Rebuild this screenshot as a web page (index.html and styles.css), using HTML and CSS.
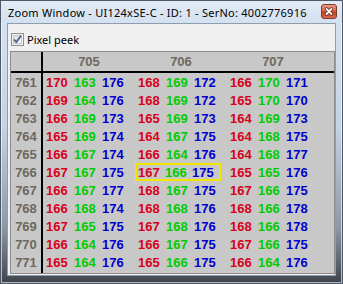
FILE: index.html
```
<!DOCTYPE html>
<html lang="en">
<head>
    <meta charset="UTF-8">
    <title>Zoom Window</title>
    <link rel="stylesheet" href="styles.css">
</head>
<body>
    <div class="window">
        <div class="titlebar">
            <span class="title">Zoom Window - UI124xSE-C - ID: 1 - SerNo: 4002776916</span>
            <svg class="close" width="16" height="15" viewBox="0 0 16 15">
                <defs>
                    <linearGradient id="cl" x1="0" y1="0" x2="0" y2="1">
                        <stop offset="0" stop-color="#eba391"/>
                        <stop offset="0.45" stop-color="#d8664c"/>
                        <stop offset="0.55" stop-color="#c3401f"/>
                        <stop offset="1" stop-color="#d8704f"/>
                    </linearGradient>
                </defs>
                <rect x="0.5" y="0.5" width="15" height="14" rx="2.5" fill="url(#cl)" stroke="#7d3a2c"/>
                <path d="M5.5 5 L10.5 10 M10.5 5 L5.5 10" stroke="#5e2418" stroke-width="3.4" stroke-linecap="round"/>
                <path d="M5.5 5 L10.5 10 M10.5 5 L5.5 10" stroke="#ffffff" stroke-width="1.8" stroke-linecap="round"/>
            </svg>
        </div>
        <div class="client">
            <div class="options">
                <svg class="check" width="13" height="13" viewBox="0 0 13 13">
                    <defs>
                        <linearGradient id="cb" x1="0" y1="0" x2="1" y2="1">
                            <stop offset="0" stop-color="#d8d8d8"/>
                            <stop offset="1" stop-color="#fbfbfb"/>
                        </linearGradient>
                    </defs>
                    <rect x="0.5" y="0.5" width="12" height="12" fill="#f4f4f4" stroke="#8e8f8f"/>
                    <rect x="2.5" y="2.5" width="8" height="8" fill="url(#cb)" stroke="#c6c6c6"/>
                    <path d="M3 6.5 L5.3 9 L10 2.8" fill="none" stroke="#4a5f8e" stroke-width="1.8"/>
                </svg>
                <label>Pixel peek</label>
            </div>
            <div class="peek">
                <div class="row head">
                    <div class="lbl"></div>
                    <div class="grp">705</div>
                    <div class="grp">706</div>
                    <div class="grp">707</div>
                </div>
                <div class="row">
                    <div class="lbl">761</div>
                    <div class="grp"><span class="r">170</span><span class="g">163</span><span class="b">176</span></div>
                    <div class="grp"><span class="r">168</span><span class="g">169</span><span class="b">172</span></div>
                    <div class="grp"><span class="r">166</span><span class="g">170</span><span class="b">171</span></div>
                </div>
                <div class="row">
                    <div class="lbl">762</div>
                    <div class="grp"><span class="r">169</span><span class="g">164</span><span class="b">176</span></div>
                    <div class="grp"><span class="r">168</span><span class="g">169</span><span class="b">172</span></div>
                    <div class="grp"><span class="r">165</span><span class="g">170</span><span class="b">170</span></div>
                </div>
                <div class="row">
                    <div class="lbl">763</div>
                    <div class="grp"><span class="r">166</span><span class="g">169</span><span class="b">173</span></div>
                    <div class="grp"><span class="r">165</span><span class="g">169</span><span class="b">173</span></div>
                    <div class="grp"><span class="r">164</span><span class="g">169</span><span class="b">173</span></div>
                </div>
                <div class="row">
                    <div class="lbl">764</div>
                    <div class="grp"><span class="r">165</span><span class="g">169</span><span class="b">174</span></div>
                    <div class="grp"><span class="r">164</span><span class="g">167</span><span class="b">175</span></div>
                    <div class="grp"><span class="r">164</span><span class="g">168</span><span class="b">175</span></div>
                </div>
                <div class="row">
                    <div class="lbl">765</div>
                    <div class="grp"><span class="r">166</span><span class="g">167</span><span class="b">174</span></div>
                    <div class="grp"><span class="r">166</span><span class="g">164</span><span class="b">176</span></div>
                    <div class="grp"><span class="r">164</span><span class="g">168</span><span class="b">177</span></div>
                </div>
                <div class="row">
                    <div class="lbl">766</div>
                    <div class="grp"><span class="r">167</span><span class="g">167</span><span class="b">175</span></div>
                    <div class="grp sel"><span class="r">167</span><span class="g">166</span><span class="b">175</span></div>
                    <div class="grp"><span class="r">165</span><span class="g">165</span><span class="b">176</span></div>
                </div>
                <div class="row">
                    <div class="lbl">767</div>
                    <div class="grp"><span class="r">166</span><span class="g">167</span><span class="b">177</span></div>
                    <div class="grp"><span class="r">168</span><span class="g">167</span><span class="b">175</span></div>
                    <div class="grp"><span class="r">167</span><span class="g">166</span><span class="b">175</span></div>
                </div>
                <div class="row">
                    <div class="lbl">768</div>
                    <div class="grp"><span class="r">166</span><span class="g">168</span><span class="b">174</span></div>
                    <div class="grp"><span class="r">168</span><span class="g">168</span><span class="b">176</span></div>
                    <div class="grp"><span class="r">168</span><span class="g">166</span><span class="b">178</span></div>
                </div>
                <div class="row">
                    <div class="lbl">769</div>
                    <div class="grp"><span class="r">167</span><span class="g">165</span><span class="b">175</span></div>
                    <div class="grp"><span class="r">167</span><span class="g">168</span><span class="b">176</span></div>
                    <div class="grp"><span class="r">168</span><span class="g">166</span><span class="b">178</span></div>
                </div>
                <div class="row">
                    <div class="lbl">770</div>
                    <div class="grp"><span class="r">166</span><span class="g">164</span><span class="b">176</span></div>
                    <div class="grp"><span class="r">166</span><span class="g">167</span><span class="b">175</span></div>
                    <div class="grp"><span class="r">167</span><span class="g">166</span><span class="b">175</span></div>
                </div>
                <div class="row">
                    <div class="lbl">771</div>
                    <div class="grp"><span class="r">165</span><span class="g">164</span><span class="b">176</span></div>
                    <div class="grp"><span class="r">165</span><span class="g">166</span><span class="b">175</span></div>
                    <div class="grp"><span class="r">166</span><span class="g">164</span><span class="b">176</span></div>
                </div>
                <div class="row foot">
                    <div class="lbl"></div>
                </div>
            </div>
        </div>
    </div>
</body>
</html>
```

FILE: styles.css
```
* {
    box-sizing: border-box;
}
body {
    margin: 0;
}
.window {
    width: 343px;
    height: 284px;
    display: flex;
    flex-direction: column;
    background: linear-gradient(#d9e5f3, #c3d2e4 45%, #8e99a8 80%, #3f444c);
    border: 1px solid #50596a;
    box-shadow: inset 0 0 0 1px rgba(255, 255, 255, 0.6);
}
.titlebar {
    height: 22px;
    display: flex;
    align-items: center;
    padding-left: 7px;
    background: linear-gradient(#e2ecf7, #d3e0ef);
}
.title {
    flex: 1;
    font-family: "Noto Sans", sans-serif;
    font-size: 11px;
    letter-spacing: 0.25px;
    color: #000;
    white-space: nowrap;
    overflow: hidden;
}
.close {
    flex-shrink: 0;
    margin-right: 5px;
    margin-top: -2px;
}
.client {
    flex: 1;
    margin: 0 6px 7px 6px;
    border: 1px solid #8f9cad;
    background-color: #f0f0f0;
    display: flex;
    flex-direction: column;
}
.options {
    height: 27px;
    display: flex;
    align-items: center;
    padding: 4px 0 0 3px;
}
.options label {
    margin-left: 3px;
    font-family: "Noto Sans", sans-serif;
    font-size: 11px;
}
.peek {
    flex: 1;
    margin: 0 0 1px 2px;
    display: flex;
    flex-direction: column;
    background-color: #c8c8c8;
    border: 1px solid #8c8c8c;
    font-family: "Liberation Sans", Arial, sans-serif;
    font-size: 13px;
    font-weight: bold;
    color: #6d6960;
}
.row {
    height: 18px;
    display: flex;
    flex-shrink: 0;
}
.head {
    height: 21px;
    border-bottom: 2px solid #000;
}
.foot {
    flex: 1;
}
.lbl {
    width: 32px;
    border-right: 2px solid #000;
    display: flex;
    align-items: center;
    justify-content: center;
}
.grp {
    width: 92px;
    padding-left: 3px;
    display: flex;
    align-items: center;
}
.head .grp {
    justify-content: center;
    padding-left: 0;
}
.grp span {
    width: 28px;
}
.grp.sel {
    width: 86px;
    margin-right: 6px;
    padding-left: 1px;
    border: 2px solid #f2e600;
}
.r {
    color: #d8001a;
}
.g {
    color: #00cc00;
}
.b {
    color: #0000cc;
}
```
